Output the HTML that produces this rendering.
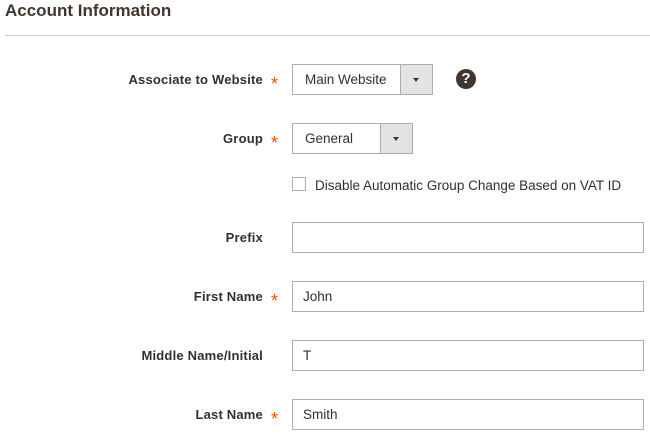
<!DOCTYPE html>
<html><head><style>
body{margin:0;width:650px;height:442px;background:#fff;font-family:"Liberation Sans",sans-serif;color:#303030;position:relative;overflow:hidden}
.t{position:absolute;left:5px;top:0px;font-size:17px;color:#41362f;font-weight:600;line-height:22px}
.hr{position:absolute;left:5px;right:0;top:35px;height:1px;background:#ccc}
.l{position:absolute;right:387px;font-size:13px;font-weight:bold;color:#303030;line-height:16px;letter-spacing:0.2px}
.a{position:absolute;left:271px;color:#eb5202;font-size:18px;line-height:16px;top:0}
.b{position:absolute;left:292px;box-sizing:border-box;border:1px solid #adadad;height:31px;background:#fff;font-size:13.5px;line-height:30px;padding-left:12px}
.s{position:absolute;right:0;top:0;bottom:0;width:31px;background:#e3e3e3;border-left:1px solid #adadad}
.s:after{content:"";position:absolute;left:12px;top:13px;border:3px solid transparent;border-top:4px solid #41362f;border-bottom:0}
</style></head><body>
<div class="t">Account Information</div>
<div class="hr"></div>

<div class="l" style="top:72px">Associate to Website</div><div class="a" style="top:76px">*</div>
<div class="b" style="top:64px;width:141px">Main Website<div class="s"></div></div>
<div style="position:absolute;left:456px;top:69px;width:20px;height:20px;border-radius:50%;background:#41362f;color:#fff;font-weight:bold;font-size:15px;text-align:center;line-height:20px">?</div>

<div class="l" style="top:131px">Group</div><div class="a" style="top:135px">*</div>
<div class="b" style="top:123px;width:121px">General<div class="s"></div></div>

<div style="position:absolute;left:292px;top:177px;width:14px;height:14px;box-sizing:border-box;border:1px solid #adadad;border-radius:1px"></div>
<div style="position:absolute;left:315px;top:178px;font-size:13.5px;line-height:16px">Disable Automatic Group Change Based on VAT ID</div>

<div class="l" style="top:230px">Prefix</div>
<div class="b" style="top:222px;width:352px"></div>

<div class="l" style="top:289px">First Name</div><div class="a" style="top:293px">*</div>
<div class="b" style="top:281px;width:352px;padding-left:10px">John</div>

<div class="l" style="top:348px">Middle Name/Initial</div>
<div class="b" style="top:340px;width:352px;padding-left:10px">T</div>

<div class="l" style="top:407px">Last Name</div><div class="a" style="top:411px">*</div>
<div class="b" style="top:399px;width:352px;padding-left:10px">Smith</div>
</body></html>
